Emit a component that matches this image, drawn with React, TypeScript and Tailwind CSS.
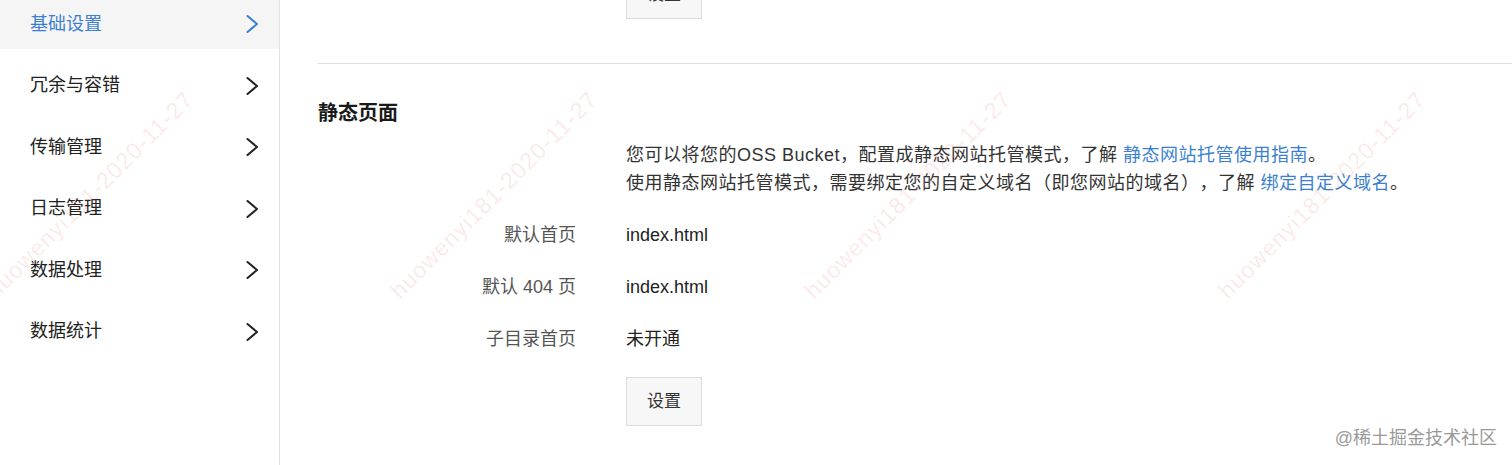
const menu = ['基础设置', '冗余与容错', '传输管理', '日志管理', '数据处理', '数据统计'];

const rows = [
  { label: '默认首页', value: 'index.html' },
  { label: '默认 404 页', value: 'index.html' },
  { label: '子目录首页', value: '未开通' },
];

const marks = [90, 494, 908, 1322];

function Chevron() {
  return (
    <svg width="14" height="20" viewBox="0 0 14 20" fill="none" stroke="currentColor" strokeWidth="2" strokeLinecap="round" strokeLinejoin="round">
      <path d="M2.5 2 L12 10 L2.5 18" />
    </svg>
  );
}

export default function App() {
  return (
    <div
      className="relative h-[465px] w-[1512px] overflow-hidden bg-white text-[#333] [text-spacing-trim:space-all]"
      style={{ fontFamily: '"Liberation Sans", "Noto Sans CJK SC", sans-serif' }}
    >
      <div className="flex h-full">
        {/* 侧边菜单 */}
        <aside className="w-[280px] shrink-0 border-r border-[#e3e3e3]">
          <ul className="-mt-[1px] flex flex-col gap-[11.6px]">
            {menu.map((item, i) => (
              <li
                key={item}
                className={`flex h-[50px] items-center justify-between pl-[30px] pr-[20px] text-[18px] ${
                  i === 0 ? 'bg-[#f5f5f6] text-[#3c7fd0]' : 'text-[#222]'
                }`}
              >
                <span>{item}</span>
                <Chevron />
              </li>
            ))}
          </ul>
        </aside>

        {/* 内容 */}
        <main className="flex-1 pl-[38px]">
          <div className="grid grid-cols-[258px_1fr] gap-x-[50px]">
            <div />
            <div>
              <button className="-mt-[30px] block h-[49px] w-[76px] border border-[#dcdcdc] bg-[#f7f7f7] text-[17px] text-[#333]">
                设置
              </button>
            </div>
          </div>

          <div className="mt-[44px] border-t border-[#e0e0e0]" />

          <h2 className="mt-[35px] text-[20px] font-bold leading-[28px] text-[#1a1a1a]">静态页面</h2>

          <div className="mt-[14px] grid grid-cols-[258px_1fr] gap-x-[50px] text-[18px] leading-[28px] tracking-[0.5px]">
            <div />
            <div className="text-[#333]">
              <p>
                您可以将您的OSS Bucket，配置成静态网站托管模式，了解{' '}
                <a className="text-[#3c7fd0]">静态网站托管使用指南</a>。
              </p>
              <p>
                使用静态网站托管模式，需要绑定您的自定义域名（即您网站的域名），了解{' '}
                <a className="text-[#3c7fd0]">绑定自定义域名</a>。
              </p>
            </div>
          </div>

          <div className="mt-[24px] grid grid-cols-[258px_1fr] gap-x-[50px] gap-y-[24px] text-[18px] leading-[28px]">
            {rows.map((r) => (
              <div key={r.label} className="contents">
                <div className="text-right text-[#555]">{r.label}</div>
                <div className="text-[#222]">{r.value}</div>
              </div>
            ))}
            <div />
            <div>
              <button className="block h-[49px] w-[76px] border border-[#dcdcdc] bg-[#f7f7f7] text-[17px] text-[#333]">
                设置
              </button>
            </div>
          </div>
        </main>
      </div>

      {/* 水印 */}
      {marks.map((x) => (
        <div
          key={x}
          className="pointer-events-none absolute top-[195px] -translate-x-1/2 -translate-y-1/2 -rotate-45 whitespace-nowrap text-[23px] tracking-[1px] text-[rgba(225,90,90,0.14)]"
          style={{ left: x }}
        >
          huowenyi181-2020-11-27
        </div>
      ))}

      <div className="pointer-events-none absolute bottom-[13px] right-[15px] text-[18px] text-[#9a9a9a]">
        @稀土掘金技术社区
      </div>
    </div>
  );
}
